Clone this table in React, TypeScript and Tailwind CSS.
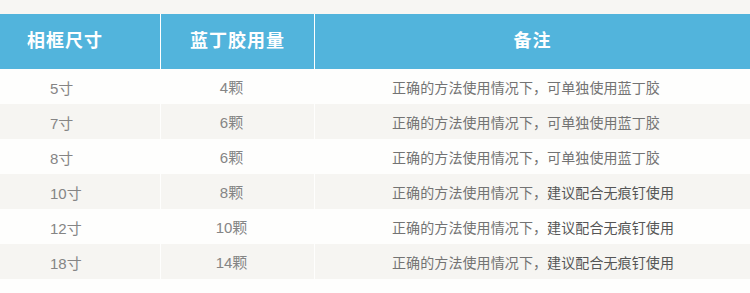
const rows = [
  { size: "5寸", qty: "4颗", tail: "可单独使用蓝丁胶", strong: false },
  { size: "7寸", qty: "6颗", tail: "可单独使用蓝丁胶", strong: false },
  { size: "8寸", qty: "6颗", tail: "可单独使用蓝丁胶", strong: false },
  { size: "10寸", qty: "8颗", tail: "建议配合无痕钉使用", strong: true },
  { size: "12寸", qty: "10颗", tail: "建议配合无痕钉使用", strong: true },
  { size: "18寸", qty: "14颗", tail: "建议配合无痕钉使用", strong: true },
];

const font = { fontFamily: '"Liberation Sans", "Noto Sans CJK SC", sans-serif' };

export default function App() {
  return (
    <div className="w-[750px] h-[293px] overflow-hidden bg-[#fefefd]" style={font}>
      <div className="h-[14px] bg-[#f7f6f3]" />
      <div className="grid grid-cols-[161px_154px_1fr] h-[55px] bg-[#52b4dc] text-white text-[18px] font-bold tracking-[1px]">
        <div className="flex items-center pl-[27px] border-r border-white">相框尺寸</div>
        <div className="flex items-center justify-center border-r border-white">蓝丁胶用量</div>
        <div className="flex items-center justify-center">备注</div>
      </div>
      {rows.map((r, i) => (
        <div
          key={r.size}
          className={`grid grid-cols-[161px_154px_1fr] h-[35px] ${i % 2 === 1 ? "bg-[#f6f5f2]" : "bg-[#fefefd]"}`}
        >
          <div className="flex items-center pl-[50px] pt-[6px] border-r border-[#fefefd] text-[15px] text-[#858585]">
            {r.size}
          </div>
          <div className="flex items-center justify-center pr-[12px] pt-[3px] border-r border-[#fefefd] text-[15px] text-[#858585]">
            {r.qty}
          </div>
          <div className="flex items-center pl-[77px] pt-[4px] text-[14px] text-[#737373] tracking-[0.1px]">
            正确的方法使用情况下，
            <span className={r.strong ? "text-[#555555]" : ""}>{r.tail}</span>
          </div>
        </div>
      ))}
    </div>
  );
}
